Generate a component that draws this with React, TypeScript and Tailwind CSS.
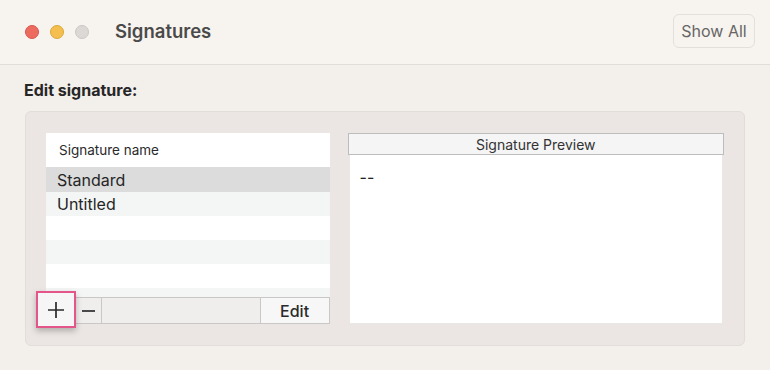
export default function App() {
  const rows = [
    { label: "Standard", cls: "bg-[#dcdcdc] h-[25px]" },
    { label: "Untitled", cls: "bg-[#f4f5f5] h-[24px]" },
    { label: "", cls: "bg-white h-[24px]" },
    { label: "", cls: "bg-[#f4f5f5] h-[24px]" },
    { label: "", cls: "bg-white h-[24px]" },
    { label: "", cls: "bg-[#f4f5f5] h-[9px]" },
  ];

  return (
    <div
      className="w-[770px] h-[370px] bg-[#f3efeb] overflow-hidden"
      style={{ fontFamily: "Inter, 'Liberation Sans', sans-serif" }}
    >
      {/* Title bar */}
      <div className="h-[65px] bg-[#f7f3ee] border-b border-[#e2ddd8] flex items-center justify-between pl-[25px] pr-[15px]">
        <div className="flex items-center">
          <div className="flex gap-[11px]">
            <span className="w-[14px] h-[14px] rounded-full bg-[#ec6a5e] border border-[#d9574b]" />
            <span className="w-[14px] h-[14px] rounded-full bg-[#f4bf4f] border border-[#dca838]" />
            <span className="w-[14px] h-[14px] rounded-full bg-[#dcd8d5] border border-[#cbc7c4]" />
          </div>
          <span className="ml-[26px] text-[18.5px] font-semibold text-[#4a4a4a]">
            Signatures
          </span>
        </div>
        <button className="h-[34px] w-[82px] rounded-[6px] border border-[#e3dfda] bg-[#f7f3ee] text-[16px] text-[#666] mt-[-2px]">
          Show All
        </button>
      </div>

      {/* Content */}
      <div className="px-[24px]">
        <div className="mt-[15px] h-[20px] text-[16px] font-bold text-[#262626] leading-[20px]">
          Edit signature:
        </div>
        <div className="mt-[11px] ml-px w-[720px] h-[235px] rounded-[6px] bg-[#ebe6e3] border border-[#e2ddda] flex pl-[20px] pr-[20px] pt-[21px] gap-[18px]">
          {/* List column */}
          <div className="w-[284px] flex flex-col">
            <div className="h-[34px] bg-white flex items-center pl-[13px] text-[13.5px] text-[#2a2a2a]">
              Signature name
            </div>
            {rows.map((r, i) => (
              <div
                key={i}
                className={`${r.cls} flex items-center pl-[11px] text-[16px] text-[#262626]`}
              >
                {r.label}
              </div>
            ))}
            <div className="relative h-[27px] bg-[#efeeed] border border-[#c9c8c7] flex">
              <div className="w-[29px] border-r border-[#c9c8c7]" />
              <div className="w-[26px] border-r border-[#c9c8c7] flex items-center justify-center">
                <span className="block w-[13px] h-[2px] bg-[#4a4a4a]" />
              </div>
              <div className="flex-1" />
              <div className="w-[69px] bg-[#f7f7f7] border-l border-[#c9c8c7] flex items-center justify-center text-[16px] font-medium text-[#2a2a2a]">
                Edit
              </div>
              {/* highlighted add button */}
              <div className="absolute left-[-11px] top-[-7px] w-[40px] h-[37px] bg-[#f6f6f6] border-2 border-[#e4558a] shadow-[0_3px_6px_rgba(0,0,0,0.25)] flex items-center justify-center">
                <svg width="18" height="18" viewBox="0 0 18 18">
                  <path d="M9 1v16M1 9h16" stroke="#2a2a2a" strokeWidth="1.7" />
                </svg>
              </div>
            </div>
          </div>

          {/* Preview column */}
          <div className="w-[377px] flex flex-col">
            <div className="h-[22px] bg-[#f5f5f5] border border-[#bdbdbd] flex items-center justify-center text-[14px] text-[#333]">
              Signature Preview
            </div>
            <div className="mx-[2px] h-[169px] bg-white border-b border-[#e8e8e8] pl-[10px] pt-[12px] text-[16px] text-[#222] leading-[20px]">
              --
            </div>
          </div>
        </div>
      </div>
    </div>
  );
}
